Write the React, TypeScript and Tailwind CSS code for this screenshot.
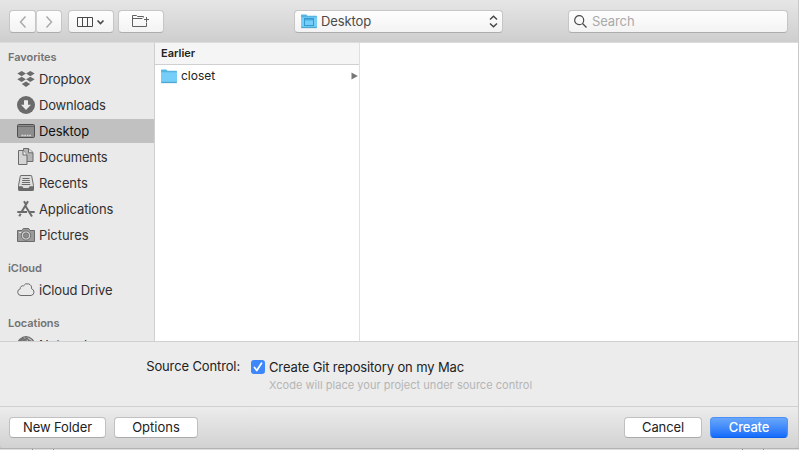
import React from "react";

const G = "#6b6b6b";

function DropboxIcon() {
  return (
    <svg width="18" height="18" viewBox="0 0 18 18" fill={G}>
      <path d="M4.700 1 8.900 3.600 4.700 6.200.300 3.600zM13.300 1l4.400 2.600-4.400 2.600L9.100 3.600zM4.700 6.700 8.900 9.300l-4.200 2.600L.300 9.300zM13.300 6.700l4.400 2.600-4.400 2.600L9.100 9.300zM9 11.400l4.200 2.600L9 16.900l-4.200-2.900z" />
    </svg>
  );
}
function DownloadsIcon() {
  return (
    <svg width="18" height="18" viewBox="0 0 18 18">
      <circle cx="9" cy="9" r="9" fill={G} />
      <path d="M7 4.2h4v4.600h3L9 14 4 8.800h3z" fill="#ececec" />
    </svg>
  );
}
function DesktopIcon() {
  return (
    <svg width="18" height="18" viewBox="0 0 18 18">
      <rect x=".5" y="2.5" width="17" height="13" rx="1.2" fill="#8d8d8d" stroke="#505050" />
      <path d="M1 4.500h16" stroke="#666" />
      <path d="M4.500 13.500h2M7.300 13.500h1.600M9.800 13.500h1.600M12.300 13.500h1.600" stroke="#ddd" strokeWidth="1.6" />
    </svg>
  );
}
function DocumentsIcon() {
  return (
    <svg width="18" height="18" viewBox="0 0 18 18" stroke={G}>
      <path d="M6.500 .5h5l4.500 4v9H6.500z" fill="#b4b4b4" />
      <path d="M11.500 .5v4.300h4.500" fill="#e0e0e0" />
      <path d="M1.500 2.500H6l4 4.500v9.500H1.500z" fill="#d4d4d4" />
      <path d="M6 2.500v4.500h4" fill="#f0f0f0" />
    </svg>
  );
}
function RecentsIcon() {
  return (
    <svg width="18" height="18" viewBox="0 0 18 18">
      <path d="M4 1.500h10q.6 0 .7.600l1.800 9.400v4.200q0 .8-.8.8H2.300q-.8 0-.8-.8v-4.200L3.300 2.100q.1-.6.700-.6z" fill="#ddd" stroke={G} />
      <path d="M5.500 4.500h7M5.200 6.500h7.600M5 8.500h8M4.700 10.500h8.600" stroke={G} />
      <path d="M1.500 12.300h3.800l1.200 1.600h5l1.200-1.600h3.800v4.200h-15z" fill={G} />
    </svg>
  );
}
function ApplicationsIcon() {
  return (
    <svg width="18" height="18" viewBox="0 0 18 18" fill="none" stroke={G} strokeWidth="2">
      <path d="M7 1.200 9 4.600M11 1.200 4.800 11.500M8.300 5.800l6.700 10.700M.300 12h9.700M13 12h4.700M3.700 13.800l-1.500 2.500" />
    </svg>
  );
}
function PicturesIcon() {
  return (
    <svg width="18" height="18" viewBox="0 0 18 18">
      <path d="M.5 4.500h4.600L6.300 2.500h5.400l1.200 2h4.600v11H.5z" fill="#9b9b9b" stroke={G} />
      <circle cx="9" cy="9.5" r="4.600" fill="#ddd" stroke={G} />
      <circle cx="9" cy="9.5" r="2.700" fill="#8b8b8b" stroke={G} strokeWidth=".8" />
      <path d="M2 6.500h2" stroke="#e5e5e5" />
    </svg>
  );
}
function CloudIcon() {
  return (
    <svg width="18" height="18" viewBox="0 0 18 18" fill="none" stroke={G}>
      <path d="M4 14.500a3.400 3.400 0 0 1-.7-6.700 2.500 2.500 0 0 1 3.200-2.900 4.300 4.300 0 0 1 8 2.800 3.500 3.500 0 0 1-.4 6.800z" />
    </svg>
  );
}
function GlobeIcon() {
  return (
    <svg width="18" height="18" viewBox="0 0 18 18" fill="#c5c5c5" stroke={G} strokeWidth="1.3">
      <circle cx="9" cy="9" r="8.300" />
      <path d="M2.500 5 6 2.500l2 1L5 7zM10 2l2 3 4 1M9 1v4" fill="#888" />
    </svg>
  );
}
function FolderIcon({ desktop = false }: { desktop?: boolean }) {
  return (
    <svg width="16" height="15" viewBox="0 0 16 15" className="shrink-0">
      <path d="M0 1.200Q0 .4.800.4h4.400l1.300 1.400h8.700q.8 0 .8.800V13q0 1-1 1H1q-1 0-1-1z" fill="#56b5e0" />
      <path d="M0 3.300h16V12.700H0z" fill="#74cef8" />
      <path d="M.3 13.700h15.400" stroke="#4a9fc9" strokeWidth=".8" />
      {desktop && (
        <g fill="none" stroke="#349bd0">
          <rect x="3.500" y="4.500" width="9" height="7" />
          <path d="M4 5.800h8" />
        </g>
      )}
    </svg>
  );
}

type Row = { label: string; icon: React.ReactNode; track: string; selected?: boolean };
const favorites: Row[] = [
  { label: "Dropbox", icon: <DropboxIcon />, track: "tracking-[-0.1px]" },
  { label: "Downloads", icon: <DownloadsIcon />, track: "tracking-[-0.2px]" },
  { label: "Desktop", icon: <DesktopIcon />, track: "tracking-[-0.1px]", selected: true },
  { label: "Documents", icon: <DocumentsIcon />, track: "tracking-[-0.15px]" },
  { label: "Recents", icon: <RecentsIcon />, track: "tracking-[-0.1px]" },
  { label: "Applications", icon: <ApplicationsIcon />, track: "tracking-[-0.13px]" },
  { label: "Pictures", icon: <PicturesIcon />, track: "tracking-[-0.05px]" },
];

function SideRow({ label, icon, track, selected }: Row) {
  return (
    <div className={`flex h-[26px] shrink-0 items-center gap-[4px] pl-[17px] ${selected ? "text-[#111]" : "text-[#303030]"}`}>
      <span className="shrink-0">{icon}</span>
      <span className={`whitespace-nowrap ${track}`}>{label}</span>
    </div>
  );
}

const control = "flex h-[23px] items-center rounded-[4px] border border-[#c6c6c6] border-b-[#adadad] bg-linear-to-b from-[#fefefe] to-[#f3f3f3]";
const push = "flex h-[21px] items-center justify-center rounded-[4px] border border-[#c0c0c0] border-b-[#aaa] bg-white pb-px text-[#222]";

export default function App() {
  return (
    <div className="flex h-[450px] w-[799px] flex-col overflow-hidden bg-[#c9c9c9] font-['Inter','Liberation_Sans',sans-serif] text-[13px] leading-4 text-[#222]">
      <div className="flex h-[448px] w-[798px] flex-col overflow-hidden rounded-b-[4px]">
        <header className="flex h-[43px] shrink-0 items-start border-b border-[#dcdcdc] bg-linear-to-b from-[#e6e6e6] to-[#cecece] pl-[9px] pt-[10px]">
          <button className={`${control} w-[27px] justify-center rounded-r-[3px]`}>
            <svg width="10" height="14" viewBox="0 0 10 14" fill="none" stroke="#aaa" strokeWidth="1.5"><path d="M7.500 1.500 2.500 7l5 5.500" /></svg>
          </button>
          <button className={`${control} w-[26px] justify-center rounded-l-[3px] border-l-[#d0d0d0]`}>
            <svg width="10" height="14" viewBox="0 0 10 14" fill="none" stroke="#aaa" strokeWidth="1.5"><path d="m2.500 1.500 5 5.500-5 5.500" /></svg>
          </button>
          <button className={`${control} ml-[6px] w-[46px] pl-[8px]`}>
            <svg width="29" height="12" viewBox="0 0 29 12" fill="none" stroke="#484848"><path d="M.5 1.500h15v9H.5zM5.500 1.500v9M10.500 1.500v9" /><path d="m20.500 4.500 3 3 3-3" strokeWidth="1.600" /></svg>
          </button>
          <button className={`${control} ml-[4px] w-[46px] justify-center`}>
            <svg width="18" height="14" viewBox="0 0 18 14" fill="none" stroke="#606060" className="relative -top-px"><path d="M11.500 3.500V2.500h-6l-1-1h-4v11h14V8.500M.5 4.500h10M14.500 3v5M12 5.500h5" /></svg>
          </button>
          <div className={`${control} ml-[130px] w-[209px] justify-between pl-[6px] pr-[4px] text-[#4a4a4a]`}>
            <span className="flex items-center gap-[4px]"><FolderIcon desktop /><span className="pb-px tracking-[-0.1px]">Desktop</span></span>
            <svg width="9" height="13" viewBox="0 0 9 13" fill="none" stroke="#444" strokeWidth="1.400"><path d="M1 4.500 4.500 1.200 8 4.500M1 8.500l3.500 3.300L8 8.500" /></svg>
          </div>
          <div className={`${control} ml-[65px] w-[220px] gap-[5px] pl-[5px] text-[#a9a9a9]`}>
            <svg width="13" height="13" viewBox="0 0 13 13" fill="none" stroke="#4a4a4a" strokeWidth="1.200"><circle cx="5.200" cy="5.200" r="4.500" /><path d="m8.500 8.500 4 4" /></svg>
            <span className="pb-px tracking-[-0.1px]">Search</span>
          </div>
        </header>

        <main className="flex h-[298px] shrink-0 bg-white">
          <aside className="flex w-[155px] shrink-0 flex-col overflow-hidden border-r border-[#cfcfcf] bg-[#eaeaea]">
            <h2 className="h-[23px] shrink-0 pl-[8px] pt-[6px] text-[11px] font-semibold tracking-[-0.05px] text-[#737373]">Favorites</h2>
            {favorites.map((r) => (
              <div key={r.label} className={r.selected ? "h-[26px] shrink-0 border-t border-b border-[#eaeaea] bg-[#c1c1c1] *:-mt-px" : "h-[26px] shrink-0"}>
                <SideRow {...r} />
              </div>
            ))}
            <h2 className="mt-[12px] h-[17px] shrink-0 pl-[8px] text-[11px] font-semibold tracking-[-0.05px] text-[#737373]">iCloud</h2>
            <SideRow label="iCloud Drive" icon={<CloudIcon />} track="tracking-[-0.15px]" />
            <h2 className="mt-[12px] h-[17px] shrink-0 pl-[8px] text-[11px] font-semibold tracking-[-0.05px] text-[#737373]">Locations</h2>
            <SideRow label="Network" icon={<GlobeIcon />} track="" />
          </aside>
          <section className="w-[205px] shrink-0 border-r border-[#e0e0e0]">
            <div className="flex h-[22px] items-center border-b border-[#d0d0d0] bg-[#f5f5f5] pb-px pl-[6px] text-[11px] font-semibold">Earlier</div>
            <div className="flex h-[22px] items-center pl-[6px] pr-[1px] text-[12px]">
              <FolderIcon />
              <span className="ml-[4px]">closet</span>
              <svg className="ml-auto" width="7" height="8" viewBox="0 0 7 8"><path d="M.5.500v7L6.800 4z" fill="#777" /></svg>
            </div>
          </section>
        </main>

        <section className="flex h-[65px] shrink-0 border-t border-[#d0d0d0] bg-[#ececec] pt-[16px]">
          <span className="w-[240px] shrink-0 text-right tracking-[-0.13px]">Source Control:</span>
          <span className="ml-[11px] mt-[2px] flex size-[14px] items-center justify-center rounded-[3px] bg-[#3d87fb]">
            <svg width="10" height="10" viewBox="0 0 10 10" fill="none" stroke="white" strokeWidth="1.700" strokeLinecap="round" strokeLinejoin="round"><path d="m1.500 5.500 2.300 3L8.500 1.200" /></svg>
          </span>
          <div className="ml-[4px] pt-[1px]">
            <div className="tracking-[-0.13px]">Create Git repository on my Mac</div>
            <div className="mt-[2px] text-[11px] tracking-[0.03px] text-[#b5b5b5]">Xcode will place your project under source control</div>
          </div>
        </section>

        <footer className="flex h-[42px] shrink-0 items-start border-t border-[#d1d1d1] bg-linear-to-b from-[#ececec] to-[#d2d2d2] pl-[9px] pr-[10px] pt-[10px]">
          <button className={`${push} w-[97px] tracking-[-0.1px]`}>New Folder</button>
          <button className={`${push} ml-[8px] w-[84px]`}>Options</button>
          <button className={`${push} ml-auto w-[78px] tracking-[-0.1px]`}>Cancel</button>
          <button className="ml-[8px] flex h-[21px] w-[78px] items-center justify-center rounded-[4px] border border-[#4b91f7] border-b-[#0d61e8] bg-linear-to-b from-[#69a7fa] to-[#136bfb] pb-px font-medium tracking-[-0.15px] text-white">Create</button>
        </footer>
      </div>
      <div className="flex h-[2px] border-t border-[#b4b4b4] bg-[#dedede]">
        <span className="ml-[32px] w-[22px] border-x border-[#8f8f8f]" />
        <span className="ml-[688px] w-[22px] border-x border-[#8f8f8f]" />
      </div>
    </div>
  );
}
